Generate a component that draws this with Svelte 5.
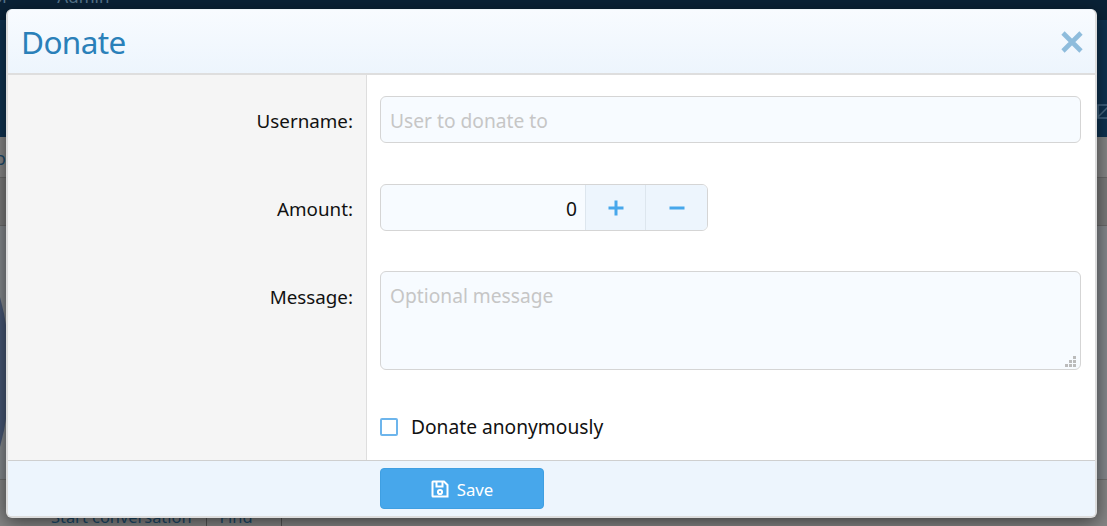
<script>
  let anon = $state(false);
  let amount = $state(0);
</script>

<div class="page">
  <div class="nav1"><span class="navtext">or</span><span class="navtext admin">Admin</span></div>
  <div class="nav2">
    <svg class="mail" width="16" height="15" viewBox="0 0 16 15" fill="none" stroke="#4a6a85" stroke-width="1.500"><path d="M1 1h14v13H1zM1 13 12 2"/></svg>
  </div>
  <div class="band b1"><span class="os">os</span></div>
  <div class="band b2"></div>
  <div class="band b3"><span class="blob"></span></div>
  <div class="band b4"></div>
  <div class="tabs"><span class="tab">Start conversation</span><span class="tab">Find</span></div>
</div>

<div class="overlay">
  <form class="modal" onsubmit={(e) => e.preventDefault()}>
    <header class="head">
      <h2>Donate</h2>
      <button type="button" class="close" aria-label="Close">
        <svg width="24" height="24" viewBox="0 0 24 24"><path d="M3 3 21 21M21 3 3 21" stroke="#8ebcdc" stroke-width="4.600" fill="none"/></svg>
      </button>
    </header>
    <div class="body">
      <div class="row r1">
        <div class="lab">Username:</div>
        <div class="val"><input class="field" type="text" placeholder="User to donate to" /></div>
      </div>
      <div class="row r2">
        <div class="lab">Amount:</div>
        <div class="val">
          <div class="spin">
            <input class="num" type="text" bind:value={amount} />
            <button type="button" class="sb" aria-label="Increase" onclick={() => amount++}>
              <svg width="16" height="16" viewBox="0 0 16 16"><path d="M8 0.500v15M0.500 8h15" stroke="#47a7eb" stroke-width="3"/></svg>
            </button>
            <button type="button" class="sb" aria-label="Decrease" onclick={() => amount--}>
              <svg width="16" height="16" viewBox="0 0 16 16"><path d="M0.500 8h15" stroke="#47a7eb" stroke-width="3"/></svg>
            </button>
          </div>
        </div>
      </div>
      <div class="row r3">
        <div class="lab">Message:</div>
        <div class="val"><div class="tawrap"><textarea class="field ta" placeholder="Optional message"></textarea>
          <svg class="grip" width="11" height="11" viewBox="0 0 11 11"><path fill="#bbb" d="M8 0h3v3H8zM4 4h3v3H4zM8 4h3v3H8zM0 8h3v3H0zM4 8h3v3H4zM8 8h3v3H8z"/></svg>
        </div></div>
      </div>
      <div class="row r4">
        <div class="lab"></div>
        <div class="val">
          <label class="check"><input type="checkbox" bind:checked={anon} /><span class="box"></span><span>Donate anonymously</span></label>
        </div>
      </div>
    </div>
    <footer class="foot">
      <div class="fl"></div>
      <button type="submit" class="save">
        <svg width="18" height="18" viewBox="0 0 18 18" fill="none" stroke="#fff" stroke-width="2"><path d="M2 1.500h11l3.500 3.500v11.500H2a.5.5 0 0 1-.5-.5V2a.5.5 0 0 1 .5-.5z"/><path d="M5.500 2v4.500h6V2"/><circle cx="9" cy="12" r="2.100"/></svg>
        <span>Save</span>
      </button>
    </footer>
  </form>
</div>

<style>
  :global(body) { margin: 0; overflow: hidden; background: #8a8a8a; }
  :global(*) { box-sizing: border-box; }
  .page { width: 1107px; height: 526px; display: flex; flex-direction: column; font-family: "Noto Sans", sans-serif; overflow: hidden; background: #777; position: relative; }
  .nav1 { height: 20px; flex: none; background: #0a2237; color: #55748c; font-size: 17px; line-height: 18px; display: flex; gap: 34px; overflow: hidden; }
  .navtext { margin-top: -12px; margin-left: -8px; }
  .admin { margin-left: 14px; }
  .nav2 { height: 117px; flex: none; background: #0f3250; position: relative; }
  .mail { position: absolute; left: 1097px; top: 84px; }
  .band { flex: none; overflow: hidden; }
  .b1 { height: 41px; color: #1b4a6b; font-size: 18px; line-height: 42px; background: #868686; border-bottom: 1px solid #6a6a6a; }
  .os { margin-left: -5px; }
  .b2 { height: 48px; background: #7a7a7a; border-bottom: 1px solid #6a6a6a; }
  .b3 { height: 254px; background: #84888c; position: relative; border-bottom: 1px solid #6f6f6f; }
  .b4 { height: 46px; background: #858585; }
  .blob { position: absolute; left: -290px; top: -63px; width: 300px; height: 418px; border-radius: 50%; background: #465674; }
  .tabs { position: absolute; left: 51px; top: 506px; display: flex; color: #1b4a6b; font-size: 16.400px; line-height: 22px; }
  .tab { padding-right: 14px; }
  .tab + .tab { border-left: 1px solid #555; padding: 0 28px 0 13px; border-right: 1px solid #555; }
  .overlay { position: absolute; left: 0; top: 0; width: 1107px; height: 526px; padding: 9px 10px 8px 6px; font-family: "Noto Sans", sans-serif; color: #111; }
  .modal { height: 509px; display: flex; flex-direction: column; border-radius: 6px; background: #fff; border: 2px solid #dcdcdc; border-top: 1px solid #eef3f8; box-shadow: 0 4px 18px rgba(0,0,0,.55); overflow: hidden; }
  .head { height: 65px; flex: none; display: flex; align-items: center; justify-content: space-between; padding: 0 11px 0 13px; background: linear-gradient(#f8fbff, #edf5fd); border-bottom: 2px solid #dedede; }
  h2 { margin: 0; font-size: 31.500px; font-weight: 400; color: #2a80b9; line-height: 40px; letter-spacing: -0.6px; }
  .close { background: none; border: 0; padding: 0; height: 24px; width: 24px; }
  .close svg { display: block; }
  .body { flex: 1; display: flex; flex-direction: column; min-height: 0; }
  .row { display: grid; grid-template-columns: 359px 1fr; flex: none; }
  .lab { background: #f5f5f5; border-right: 1px solid #dedede; text-align: right; padding-right: 13px; font-size: 18.800px; line-height: 24px; }
  .val { padding: 0 14px 0 13px; min-width: 0; }
  .r1, .r2 { height: 88px; }
  .r1 .lab, .r2 .lab, .r3 .lab { padding-top: 34px; }
  .r1 .val, .r2 .val { padding-top: 21px; }
  .r3 { height: 121px; } .r3 .val { padding-top: 20px; }
  .r4 { flex: 1; } .r4 .val { padding-top: 43px; }
  .field { display: block; width: 100%; height: 47px; border: 1px solid #d5d5d5; border-radius: 6px; background: #f7fbff; padding: 2px 9px 0; font: inherit; font-size: 19.200px; color: #111; outline: 0; }
  .field::placeholder { color: #c6c6c6; opacity: 1; }
  .tawrap { position: relative; }
  .ta { height: 99px; padding: 11px 9px; resize: none; display: block; line-height: 26px; }
  .grip { position: absolute; right: 5px; bottom: 3px; }
  .spin { display: flex; width: 328px; height: 47px; border: 1px solid #d5d5d5; border-radius: 6px; overflow: hidden; background: #f7fbff; }
  .num { flex: 1; min-width: 0; border: 0; background: none; text-align: right; font: inherit; font-size: 19.200px; padding: 2px 8px 0 0; outline: 0; color: #111; }
  .sb { width: 60px; flex: none; border: 0; border-left: 1px solid #dde6ee; background: #edf5fd; display: flex; align-items: center; justify-content: center; padding: 0; }
  .sb + .sb { width: 62px; }
  .check { display: flex; align-items: center; gap: 13px; font-size: 19.200px; line-height: 24px; position: relative; }
  .check input { position: absolute; opacity: 0; width: 18px; height: 18px; margin: 0; }
  .box { width: 18px; height: 18px; border: 2px solid #6db5ec; border-radius: 2px; background: #fff; flex: none; }
  .foot { height: 56px; flex: none; display: grid; grid-template-columns: 372px 164px; background: #edf5fd; border-top: 1px solid #cfcfcf; padding-top: 7px; }
  .save { height: 41px; background: #47a7eb; border: 1px solid #3f9fe2; border-radius: 4px; color: #fff; font: inherit; font-size: 16.800px; display: flex; align-items: center; justify-content: center; gap: 8px; padding: 1px 0 0; }
  .save svg { display: block; }
</style>
